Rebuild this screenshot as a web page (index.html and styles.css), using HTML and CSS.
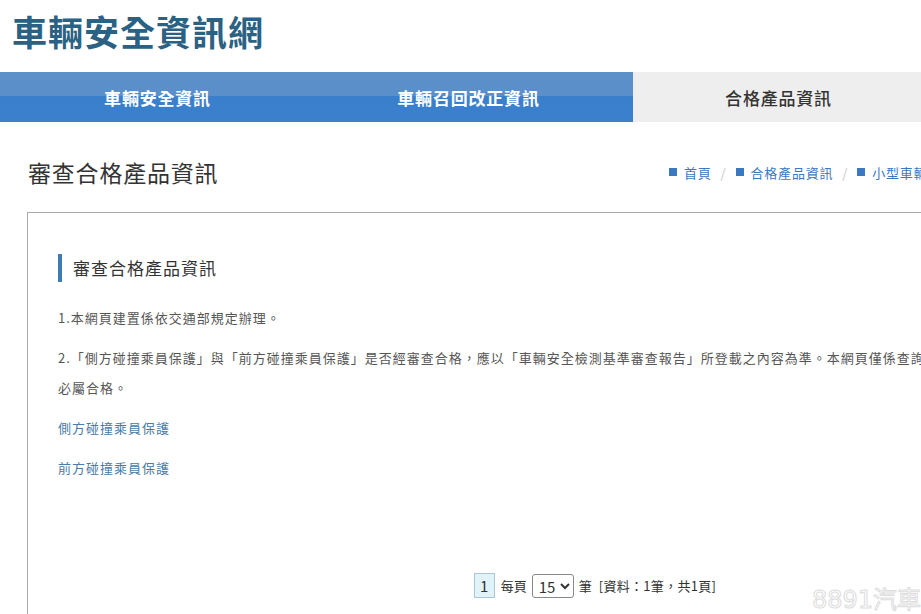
FILE: index.html
```html
<!DOCTYPE html>
<html lang="zh-Hant">
<head>
<meta charset="utf-8">
<title>車輛安全資訊網</title>
<link rel="stylesheet" href="styles.css">
</head>
<body>
<div class="page">
  <header class="site-header">
    <h1 class="site-title">車輛安全資訊網</h1>
  </header>
  <nav class="main-nav">
    <a class="nav-item" href="#">車輛安全資訊</a>
    <a class="nav-item" href="#">車輛召回改正資訊</a>
    <a class="nav-item active" href="#">合格產品資訊</a>
  </nav>
  <main class="main">
    <div class="title-row">
      <h2 class="page-title">審查合格產品資訊</h2>
      <ol class="breadcrumb">
        <li><span class="sq"></span><a href="#">首頁</a></li>
        <li class="sep">/</li>
        <li><span class="sq"></span><a href="#">合格產品資訊</a></li>
        <li class="sep">/</li>
        <li><span class="sq"></span><a href="#">小型車輛審查合格產品資訊</a></li>
      </ol>
    </div>
    <section class="panel">
      <h3 class="panel-title">審查合格產品資訊</h3>
      <p class="text">1.本網頁建置係依交通部規定辦理。</p>
      <p class="text">2.「側方碰撞乘員保護」與「前方碰撞乘員保護」是否經審查合格，應以「車輛安全檢測基準審查報告」所登載之內容為準。本網頁僅係查詢參考，所列車型之其他檢測項目未<br>必屬合格。</p>
      <p class="text"><a class="link" href="#">側方碰撞乘員保護</a></p>
      <p class="text"><a class="link" href="#">前方碰撞乘員保護</a></p>
      <div class="pager">
        <span class="page-num">1</span>
        <span>每頁</span>
        <select class="per-page"><option>15</option></select>
        <span>筆</span>
        <span class="info">[資料：1筆，共1頁]</span>
      </div>
    </section>
  </main>
</div>
<div class="watermark">8891汽車</div>
</body>
</html>
```
FILE: styles.css
```css
html, body {
  margin: 0;
  padding: 0;
  overflow: hidden;
  background: #fff;
}
body {
  font-family: "Noto Sans CJK TC", "Microsoft JhengHei", "Noto Sans", sans-serif;
  color: #555;
  height: 614px;
}
.page {
  width: 1170px;
}
.site-header {
  height: 72px;
  padding: 11px 0 0 12px;
  box-sizing: border-box;
}
.site-title {
  margin: 0;
  font-size: 35px;
  line-height: 40px;
  font-weight: 700;
  color: #2b6283;
  letter-spacing: 1px;
}
.main-nav {
  display: grid;
  grid-template-columns: 316px 317px 288px;
  height: 50px;
}
.nav-item {
  display: flex;
  align-items: center;
  justify-content: center;
  text-decoration: none;
  color: #fff;
  font-size: 17px;
  letter-spacing: 0.8px;
  font-weight: 700;
  background: linear-gradient(#5c90c9 0, #5a8fca 48%, #3a7fcc 48%, #3a80cd 100%);
}
.nav-item:first-child {
  padding-right: 1px;
}
.nav-item:nth-child(2) {
  padding-right: 12px;
}
.nav-item.active {
  background: #eeeeee;
  color: #333;
  font-weight: 500;
  padding-left: 3px;
}
.main {
  padding-left: 27px;
}
.title-row {
  display: grid;
  grid-template-columns: 641px auto;
  align-items: center;
  height: 50px;
  margin-top: 25px;
}
.page-title {
  margin: 0;
  font-size: 23px;
  font-weight: 400;
  color: #333;
  line-height: 30px;
  padding-left: 1px;
  letter-spacing: 0.8px;
}
.breadcrumb {
  display: flex;
  align-items: center;
  gap: 9px;
  list-style: none;
  margin: 0;
  padding: 0 0 0 1px;
  font-size: 13px;
  letter-spacing: 0.8px;
  white-space: nowrap;
}
.breadcrumb li {
  display: flex;
  align-items: center;
}
.breadcrumb a {
  color: #3b78c2;
  text-decoration: none;
}
.sq {
  display: inline-block;
  width: 8px;
  height: 8px;
  background: #3b78c2;
  margin-right: 7px;
}
.sep {
  color: #c8c8c8;
}
.panel {
  margin-top: 15px;
  width: 1140px;
  min-height: 420px;
  border: 1px solid #aaa;
  box-sizing: border-box;
  padding: 41px 30px 0 30px;
}
.panel-title {
  margin: 0 0 21px;
  border-left: 4px solid #3f7bb6;
  padding-left: 11px;
  height: 28px;
  line-height: 28px;
  font-size: 17px;
  letter-spacing: 1px;
  font-weight: 400;
  color: #333;
}
.text {
  margin: 0 0 10px;
  font-size: 13px;
  line-height: 30px;
  color: #555;
  letter-spacing: 1px;
}
.link {
  color: #4a7aa5;
  text-decoration: none;
}
.pager {
  margin-top: 90px;
  display: flex;
  justify-content: center;
  align-items: center;
  gap: 5px;
  font-size: 13px;
  color: #333;
  height: 25px;
  padding-right: 4px;
}
.page-num {
  display: inline-flex;
  align-items: center;
  justify-content: center;
  width: 19px;
  height: 23px;
  background: #e2f2f9;
  border: 1px solid #a9c6d6;
  font-size: 15px;
  margin-right: 1px;
}
.per-page {
  width: 42px;
  height: 24px;
  font-size: 15px;
  border: 1px solid #888;
  border-radius: 3px;
  background: #fff;
  color: #333;
  font-family: inherit;
  padding: 0 2px;
}
.info {
  margin-left: 2px;
  letter-spacing: 0.3px;
}
.watermark {
  position: absolute;
  right: 0;
  bottom: 0;
  font-family: "DejaVu Sans", "Noto Sans CJK TC", sans-serif;
  font-size: 24px;
  line-height: 28px;
  font-weight: 400;
  color: #fff;
  -webkit-text-stroke: 1px #dcdcdc;
}
```
